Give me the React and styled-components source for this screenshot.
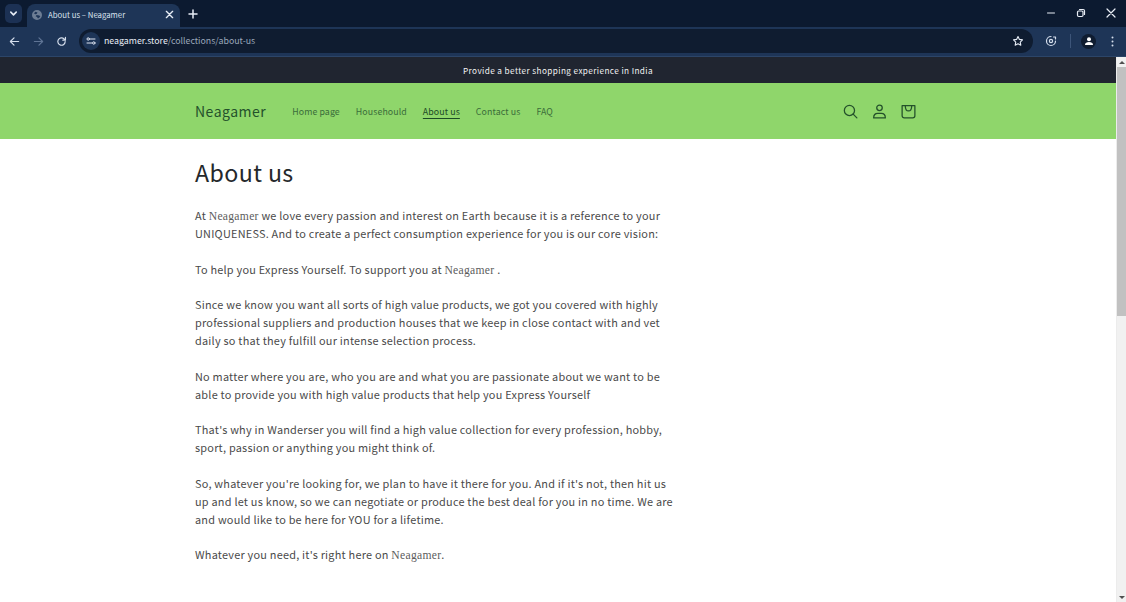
import React from "react";
import styled, { createGlobalStyle } from "styled-components";

const Global = createGlobalStyle`
  html, body { margin: 0; padding: 0; height: 100%; overflow: hidden; background: #fff; }
  #root { height: 602px; }
  * { box-sizing: border-box; }
`;
const Window = styled.div`
  width: 1126px; height: 602px; display: flex; flex-direction: column; overflow: hidden;
  font-family: "Noto Sans CJK SC", "Noto Sans", sans-serif;
`;
const TabStrip = styled.div`
  height: 27px; flex: none; background: #0c1a30; display: flex; align-items: flex-end; padding-left: 5px; position: relative;
`;
const TabSearch = styled.div`
  width: 17px; height: 19px; margin: 0 5px 4px 0; border-radius: 5px; background: #1c3154;
  display: flex; align-items: center; justify-content: center; color: #e6ecf5;
`;
const Tab = styled.div`
  width: 153px; height: 23px; background: #1e3557; border-radius: 8px 8px 0 0; display: flex; align-items: center;
  padding: 0 6px 2px 5px; color: #d9e1ee; font-size: 7.8px; line-height: 12px;
`;
const Fav = styled.span`
  display: flex; margin-right: 6px; flex: none; color: #6d7d94;
`;
const TabTitle = styled.span` flex: 1; white-space: nowrap; `;
const TabIcon = styled.span`
  display: flex; align-items: center; justify-content: center; color: ${p => p.$c || "#e6ecf5"};
  margin: ${p => p.$m || "0"};
`;
const WinControls = styled.div`
  margin-left: auto; height: 27px; padding-bottom: 1px; display: flex; align-items: center; color: #e8edf5;
`;
const WinBtn = styled.span`
  width: 30px; display: flex; justify-content: center; align-items: center;
`;
const Toolbar = styled.div`
  height: 30px; flex: none; background: #1e3557; display: flex; align-items: center; padding: 0 0 1px 0;
  border-bottom: 1px solid #2c4568;
`;
const NavBtn = styled.span`
  width: ${p => p.$w || 24}px; display: flex; justify-content: center; align-items: center;
  color: ${p => p.$dim ? "#5f7495" : "#d5deec"};
`;
const Omnibox = styled.div`
  width: 954px; height: 24px; margin-left: 4px; border-radius: 12px; background: #0f1c30; display: flex; align-items: center;
  padding: 0 9px 0 3px; color: #e8edf5;
`;
const SiteIcon = styled.span`
  width: 18px; height: 18px; border-radius: 50%; background: #1e3557; display: flex; align-items: center; justify-content: center; margin-right: 4px; color: #dfe6f2;
`;
const Url = styled.span`
  flex: 1; font-size: 8.8px; line-height: 14px; span { color: #9aa7ba; }
`;
const Divider = styled.span` width: 1px; height: 14px; background: #3d5579; margin-left: 1px; `;
const Avatar = styled.span`
  width: 15px; height: 15px; border-radius: 50%; background: #0f1c30; color: #fff; display: flex; align-items: center; justify-content: center;
`;
const Viewport = styled.div` flex: 1; display: flex; min-height: 0; `;
const Page = styled.div` flex: 1; min-width: 0; display: flex; flex-direction: column; background: #fff; `;
const Scrollbar = styled.div`
  width: 10px; flex: none; background: #f1f1f1; display: flex; flex-direction: column; align-items: center;
  border-left: 1px solid #ececec;
`;
const Arrow = styled.span`
  height: 10px; flex: none; display: flex; align-items: center; justify-content: center;
  &::before { content: ""; border-left: 3px solid transparent; border-right: 3px solid transparent;
    ${p => p.$down ? "border-top: 3px solid #505050;" : "border-bottom: 3px solid #505050;"} }
`;
const Thumb = styled.div` width: 100%; height: 249px; background: #c1c1c1; `;
const Spacer = styled.div` flex: 1; `;
const Announcement = styled.div`
  height: 26px; flex: none; background: #202530; color: #f2f2f2; display: flex; align-items: center; justify-content: center;
  padding-bottom: 1px; font-size: 8.2px; line-height: 14px; letter-spacing: .4px;
`;
const Header = styled.header`
  height: 56px; flex: none; background: #8fd66b; display: flex; align-items: center; padding: 0 195px;
  color: #2c5a2c;
`;
const Logo = styled.div` font-size: 14px; line-height: 22px; letter-spacing: .5px; color: #24512b; margin-right: 26px; `;
const Nav = styled.nav` display: flex; gap: 16px; padding-top: 1px; `;
const NavLink = styled.a`
  font-size: 8.8px; line-height: 14px; letter-spacing: .1px; color: ${p => p.$active ? "#1c4a26" : "#3a6c3a"};
  ${p => p.$active && "text-decoration: underline; text-underline-offset: 3px;"}
`;
const Icons = styled.div` margin-left: auto; display: flex; gap: 9px; color: #24512b; margin-right: 3px; `;
const IconBox = styled.span` width: 20px; height: 20px; display: flex; align-items: center; justify-content: center; `;
const Main = styled.main` padding: 12px 0 0 195px; width: 700px; color: #4a4a4a; `;
const Title = styled.h1`
  margin: 0 0 14px; font-weight: 400; font-size: 23.2px; line-height: 42px; letter-spacing: .4px; color: #25282b;
`;
const Para = styled.p`
  margin: 0 0 17.75px; font-size: 10.9px; line-height: 17.9px; letter-spacing: .23px; white-space: nowrap;
`;
const Brand = styled.span` font-family: "Liberation Serif", serif; font-size: 11.6px; letter-spacing: .3px; line-height: 0; color: #5c5c5c; `;

const S = { fill: "none", stroke: "currentColor", strokeLinecap: "round", strokeLinejoin: "round" };

export default function App() {
  return (
    <Window>
      <Global />
      <TabStrip>
        <TabSearch><svg width="9" height="9" viewBox="0 0 10 10" {...S} strokeWidth="1.8"><path d="M2 3.5 5 6.5 8 3.5" /></svg></TabSearch>
        <Tab>
          <Fav><svg width="10" height="10" viewBox="0 0 10 10" fill="currentColor"><path d="M5 0a5 5 0 1 0 0 10A5 5 0 0 0 5 0Zm-3 3.2 1.5-1.4L5.5 2.6 4.6 4 3.2 4.2ZM6 8.6 5 7 3.6 6.2 4.6 5l2.8.4.9 1.4Z" /></svg></Fav>
          <TabTitle>About us – Neagamer</TabTitle>
          <TabIcon><svg width="9" height="9" viewBox="0 0 10 10" {...S} strokeWidth="1.5"><path d="M1.5 1.5 8.5 8.5M8.5 1.5 1.5 8.5" /></svg></TabIcon>
        </Tab>
        <TabIcon $m="0 0 8px 8px"><svg width="10" height="10" viewBox="0 0 10 10" {...S} strokeWidth="1.5"><path d="M5 1V9M1 5H9" /></svg></TabIcon>
        <WinControls>
          <WinBtn><svg width="10" height="10" viewBox="0 0 10 10" {...S}><path d="M1.5 5H8.5" /></svg></WinBtn>
          <WinBtn><svg width="10" height="10" viewBox="0 0 10 10" {...S} strokeWidth="1.2"><rect x="1.5" y="3" width="5.5" height="5.5" rx="1.2" /><path d="M3.5 1.5H7.2A1.3 1.3 0 0 1 8.5 2.8V6.5" /></svg></WinBtn>
          <WinBtn><svg width="10" height="10" viewBox="0 0 10 10" {...S} strokeWidth="1.2"><path d="M1 1 9 9M9 1 1 9" /></svg></WinBtn>
        </WinControls>
      </TabStrip>
      <Toolbar>
        <NavBtn $w={29}><svg width="11" height="11" viewBox="0 0 12 12" {...S} strokeWidth="1.3"><path d="M10.5 6H1.5M5.5 2 1.5 6 5.5 10" /></svg></NavBtn>
        <NavBtn $w={18} $dim><svg width="11" height="11" viewBox="0 0 12 12" {...S} strokeWidth="1.3"><path d="M1.5 6H10.5M6.5 2 10.5 6 6.5 10" /></svg></NavBtn>
        <NavBtn $w={28}><svg width="11" height="11" viewBox="0 0 12 12" {...S} strokeWidth="1.3"><path d="M10 6A4 4 0 1 1 8.8 3.2L10.3 4.5M10.3 1.6V4.5H7.4" /></svg></NavBtn>
        <Omnibox>
          <SiteIcon><svg width="10" height="10" viewBox="0 0 10 10" {...S} strokeWidth="1"><path d="M4 3H9M1 7H6" /><circle cx="2.2" cy="3" r="1.2" /><circle cx="7.8" cy="7" r="1.2" /></svg></SiteIcon>
          <Url>neagamer.store<span>/collections/about-us</span></Url>
          <TabIcon><svg width="12" height="12" viewBox="0 0 24 24" {...S} strokeWidth="2.2"><path d="M12 3l2.8 5.8 6.2.9-4.5 4.4 1.1 6.3L12 17.4l-5.6 3 1.1-6.3L3 9.7l6.2-.9z" /></svg></TabIcon>
        </Omnibox>
        <NavBtn $w={36}><svg width="12" height="12" viewBox="0 0 12 12" {...S} strokeWidth="1.2"><path d="M10.5 6A4.5 4.5 0 1 1 6 1.5M8.5 2H10.5V4" /><circle cx="6" cy="6" r="1.6" /></svg></NavBtn>
        <Divider />
        <NavBtn $w={35}><Avatar><svg width="10" height="10" viewBox="0 0 10 10" fill="currentColor"><circle cx="5" cy="3.2" r="2" /><path d="M1 9c0-2.2 1.8-3 4-3s4 .8 4 3z" /></svg></Avatar></NavBtn>
        <NavBtn $w={12}><svg width="3" height="11" viewBox="0 0 3 11" fill="currentColor"><circle cx="1.5" cy="1.5" r="1" /><circle cx="1.5" cy="5.5" r="1" /><circle cx="1.5" cy="9.5" r="1" /></svg></NavBtn>
      </Toolbar>
      <Viewport>
        <Page>
          <Announcement>Provide a better shopping experience in India</Announcement>
          <Header>
            <Logo>Neagamer</Logo>
            <Nav>
              <NavLink>Home page</NavLink>
              <NavLink>Househould</NavLink>
              <NavLink $active>About us</NavLink>
              <NavLink>Contact us</NavLink>
              <NavLink>FAQ</NavLink>
            </Nav>
            <Icons>
              <IconBox><svg width="17" height="17" viewBox="0 0 16 16" {...S} strokeWidth="1.2"><circle cx="7" cy="7" r="4.8" /><path d="M10.5 10.5 14 14" /></svg></IconBox>
              <IconBox><svg width="17" height="17" viewBox="0 0 16 16" {...S} strokeWidth="1.2"><circle cx="8" cy="4.5" r="2.6" /><path d="M2.5 14c0-2.6 1.5-4.2 3.8-4.2h3.4c2.3 0 3.8 1.6 3.8 4.2z" /></svg></IconBox>
              <IconBox><svg width="17" height="17" viewBox="0 0 16 16" {...S} strokeWidth="1.2"><path d="M2 2.5H14V12A2 2 0 0 1 12 14H4A2 2 0 0 1 2 12Z" /><path d="M5 2.5C5 6 6 7.5 8 7.5S11 6 11 2.5" /></svg></IconBox>
            </Icons>
          </Header>
          <Main>
            <Title>About us</Title>
            <Para>At <Brand>Neagamer</Brand> we love every passion and interest on Earth because it is a reference to your<br />UNIQUENESS. And to create a perfect consumption experience for you is our core vision:</Para>
            <Para>To help you Express Yourself. To support you at <Brand>Neagamer</Brand> .</Para>
            <Para>Since we know you want all sorts of high value products, we got you covered with highly<br />professional suppliers and production houses that we keep in close contact with and vet<br />daily so that they fulfill our intense selection process.</Para>
            <Para>No matter where you are, who you are and what you are passionate about we want to be<br />able to provide you with high value products that help you Express Yourself</Para>
            <Para>That's why in Wanderser you will find a high value collection for every profession, hobby,<br />sport, passion or anything you might think of.</Para>
            <Para>So, whatever you're looking for, we plan to have it there for you. And if it's not, then hit us<br />up and let us know, so we can negotiate or produce the best deal for you in no time. We are<br />and would like to be here for YOU for a lifetime.</Para>
            <Para>Whatever you need, it's right here on <Brand>Neagamer</Brand>.</Para>
          </Main>
        </Page>
        <Scrollbar>
          <Arrow />
          <Thumb />
          <Spacer />
          <Arrow $down />
        </Scrollbar>
      </Viewport>
    </Window>
  );
}
